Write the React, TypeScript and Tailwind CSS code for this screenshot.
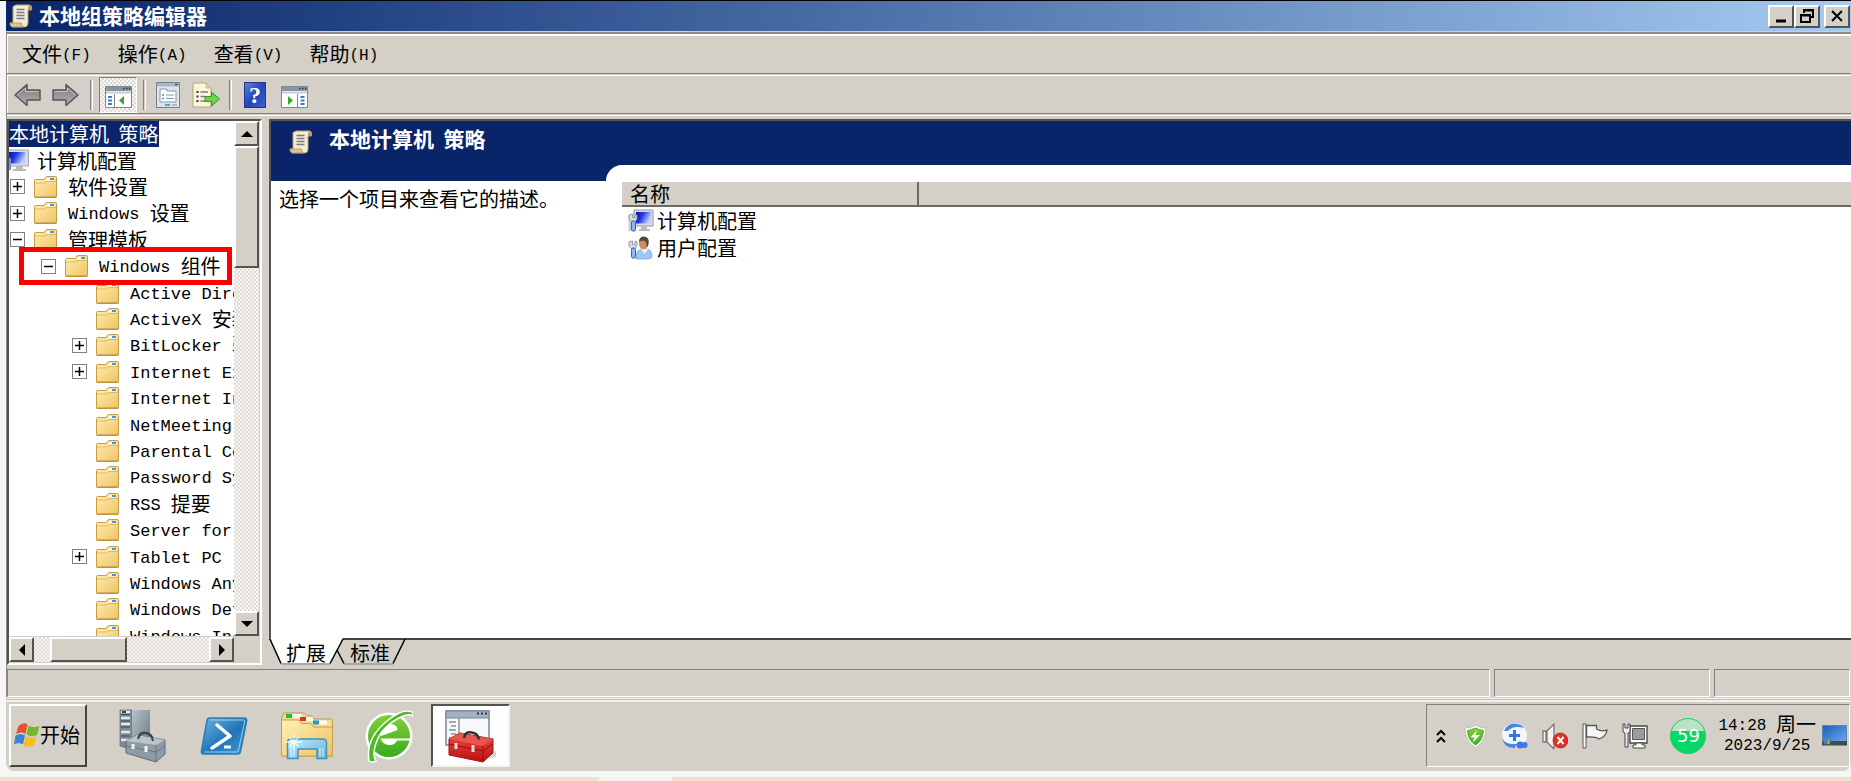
import type { ReactNode } from "react";
import clsx from "clsx";

interface TreeItem {
  label: string;
  level: 0 | 1 | 2;
  state?: "open" | "closed";
  marked?: boolean;
}

const TREE: TreeItem[] = [
  { label: "软件设置", level: 0, state: "closed" },
  { label: "Windows 设置", level: 0, state: "closed" },
  { label: "管理模板", level: 0, state: "open" },
  { label: "Windows 组件", level: 1, state: "open", marked: true },
  { label: "Active Directory", level: 2 },
  { label: "ActiveX 安装程序", level: 2 },
  { label: "BitLocker 驱动器", level: 2, state: "closed" },
  { label: "Internet Explorer", level: 2, state: "closed" },
  { label: "Internet Information", level: 2 },
  { label: "NetMeeting", level: 2 },
  { label: "Parental Controls", level: 2 },
  { label: "Password Synchronization", level: 2 },
  { label: "RSS 提要", level: 2 },
  { label: "Server for NIS", level: 2 },
  { label: "Tablet PC", level: 2, state: "closed" },
  { label: "Windows Anytime", level: 2 },
  { label: "Windows Defender", level: 2 },
  { label: "Windows Installer", level: 2 },
];

const INDENT = ["pl-px", "pl-8", "pl-[63px]"];
const MENUS = ["文件(F)", "操作(A)", "查看(V)", "帮助(H)"];

const RAISED =
  "border-2 border-t-white border-l-white border-r-[#55534f] border-b-[#55534f] bg-[#d4d0c8]";
const SUNKEN =
  "border border-t-[#808080] border-l-[#808080] border-r-white border-b-white";
const TRACK =
  "bg-[repeating-conic-gradient(#dedbd5_0_25%,#f8f7f5_0_50%)] bg-[length:4px_4px]";

// Latin runs are half as wide as the Chinese characters next to them
function Mixed({ text, wide }: { text: string; wide?: boolean }) {
  return (
    <>
      {text.split(/([\x20-\x7e]+)/).map((part, i) =>
        i % 2 === 1 ? (
          <span
            key={i}
            className={clsx(
              "align-[2px] font-['Liberation_Mono',monospace]",
              wide ? "text-[17px]/4" : "text-base/4"
            )}
          >
            {part}
          </span>
        ) : (
          part
        )
      )}
    </>
  );
}

function Gradients() {
  return (
    <svg className="absolute size-0" aria-hidden="true">
      <defs>
        <linearGradient id="folder" x1="0" y1="0" x2="1" y2="1">
          <stop offset="0" stopColor="#fff0b4" />
          <stop offset="1" stopColor="#eec263" />
        </linearGradient>
        <linearGradient id="screen" x1="0" y1="0" x2="1" y2="0.4">
          <stop offset="0" stopColor="#0a10b0" />
          <stop offset="0.45" stopColor="#2436e0" />
          <stop offset="1" stopColor="#bcd0ff" />
        </linearGradient>
        <linearGradient id="steel" x1="0" y1="0" x2="1" y2="1">
          <stop offset="0" stopColor="#b9c4cb" />
          <stop offset="1" stopColor="#66747e" />
        </linearGradient>
        <linearGradient id="arrow" x1="0" y1="0" x2="0" y2="1">
          <stop offset="0" stopColor="#777" />
          <stop offset="1" stopColor="#b4b4b4" />
        </linearGradient>
        <linearGradient id="ps" x1="0" y1="0" x2="1" y2="1">
          <stop offset="0" stopColor="#68b8e4" />
          <stop offset="0.55" stopColor="#2273b8" />
          <stop offset="1" stopColor="#3f9fd6" />
        </linearGradient>
        <linearGradient id="green" x1="0" y1="0" x2="0" y2="1">
          <stop offset="0" stopColor="#82cf38" />
          <stop offset="1" stopColor="#38ad1e" />
        </linearGradient>
        <linearGradient id="red" x1="0" y1="0" x2="0" y2="1">
          <stop offset="0" stopColor="#ee4a40" />
          <stop offset="1" stopColor="#bb1014" />
        </linearGradient>
        <linearGradient id="glass" x1="0" y1="0" x2="1" y2="1">
          <stop offset="0" stopColor="#c3efff" />
          <stop offset="1" stopColor="#62aed3" />
        </linearGradient>
        <linearGradient id="desk" x1="0" y1="0" x2="1" y2="1">
          <stop offset="0" stopColor="#1f5cb8" />
          <stop offset="1" stopColor="#6aaaf0" />
        </linearGradient>
      </defs>
    </svg>
  );
}

function ScrollIcon() {
  return (
    <svg className="size-6 shrink-0" viewBox="0 0 24 24">
      <path d="M4 2.500 7 1h14q2.500 1 1.500 5h-3.500v13q0 4-3.500 4H3q-2-1-2-4h3z" fill="#f5edcd" stroke="#b9a66e" />
      <path d="M19 6q-.5-4 2-5 3 1 1.500 5z" fill="#b99c55" />
      <path d="M1 19h11.500q0 3 2.500 4H3q-2-1-2-4z" fill="#dcc88c" stroke="#a58f55" strokeWidth=".7" />
      <path d="M7.500 5.500h8M7.500 8.500h8M7.500 11.500h8M7.500 14.500h8" stroke="#77799a" strokeWidth="1.300" />
    </svg>
  );
}

function FolderIcon() {
  return (
    <svg className="h-[22px] w-[23px] shrink-0" viewBox="0 0 23 22">
      <path d="M.5 4.500q0-1 1-1H10L12 1q.4-.5 1-.5h8.500q1 0 1 1v19q0 1-1 1H1.500q-1 0-1-1z" fill="url(#folder)" stroke="#c99c42" />
      <path d="M13.500 2h7v2.500h-8.500z" fill="#fff" />
      <path d="M16 2h4v2h-4z" fill="#3d9bd8" />
      <path d="M1 7h9.500l2.500-1.500h9" fill="none" stroke="#e5b95b" />
      <path d="M.5 21h22" stroke="#b78a35" />
    </svg>
  );
}

function MonitorIcon() {
  return (
    <svg className="h-6 w-5 shrink-0" viewBox="0 0 20 24">
      <path d="M-4 1h23.500v16H-4z" fill="#d9dce0" stroke="#a4a6aa" />
      <path d="M0 3h16.500v11.500H0z" fill="url(#screen)" />
      <path d="M7 17h7v3H7zM4 20h13v2H4z" fill="#b9bbbe" />
      <path d="M0 9h2v12H0z" fill="#5f96d8" />
    </svg>
  );
}

function Wrench() {
  return (
    <>
      <path d="M1 6v4l2 2.500h4L9 10V6L7 5v3.500H4.500V5z" fill="#d8dde2" stroke="#7e8890" strokeWidth=".8" />
      <rect x="3.500" y="12" width="4" height="10" rx="1.500" fill="#8bbbea" stroke="#2866ad" />
    </>
  );
}

function ComputerConfigIcon() {
  return (
    <svg className="h-6 w-[26px] shrink-0" viewBox="0 0 26 24">
      <path d="M6 1h19v16H6z" fill="#d9dce0" stroke="#97999d" />
      <path d="M8 3h15v11.500H8z" fill="url(#screen)" />
      <path d="M13 17h6v3h-6zM11 20h11v2H11z" fill="#b9bbbe" />
      <path d="M.5 7H4v15H.5z" fill="#c9ccd0" />
      <Wrench />
    </svg>
  );
}

function UserConfigIcon() {
  return (
    <svg className="h-6 w-[26px] shrink-0" viewBox="0 0 26 24">
      <path d="M8 23q-.5-9 6-10h5q5 1 5 7 0 3-4 3z" fill="#9dc8f1" stroke="#6ba1d6" strokeWidth=".7" />
      <path d="m13 13 3.500 5L20 13z" fill="#edf6ff" />
      <ellipse cx="15.500" cy="7.500" rx="4.500" ry="6" fill="#c98f5c" />
      <path d="M11 6q0-5.500 5-5.500 6 .5 4.500 8-1 3-2 2.500Q19 5 15 4.500q-2 0-4 1.500z" fill="#55473a" />
      <Wrench />
    </svg>
  );
}

function ArrowIcon({ flip }: { flip?: boolean }) {
  return (
    <svg className={clsx("h-6 w-[27px]", flip && "-scale-x-100")} viewBox="0 0 27 24">
      <path d="M1 12 13 1.500V7h13v10H13v5.500z" fill="url(#arrow)" stroke="#565656" strokeWidth="1.500" strokeLinejoin="round" />
      <path d="M3.500 12 11.500 5v3.500h13" fill="none" stroke="#c4c4c4" />
    </svg>
  );
}

function PaneIcon({ flip }: { flip?: boolean }) {
  return (
    <svg className="h-[22px] w-[27px]" viewBox="0 0 27 22">
      <path d="M.5.5h26v21H.5z" fill="#fff" stroke="#7d8894" />
      <path d="M1 1h25v4H1z" fill="#8794a6" />
      <path d="M18 2.500h1.500M21 2.500h1.500M24 2.500h1.500" stroke="#26364e" strokeWidth="1.500" />
      <path d="M1 6.500h25" stroke="#c6ccd4" strokeWidth="2" />
      {flip ? (
        <>
          <path d="M16.500 8v13" stroke="#7d8894" />
          <path d="M7 10v9l5-4.500z" fill="#35ab25" />
          <path d="M19.500 11h4M19.500 14.500h4M19.500 18h4" stroke="#3e7cc6" strokeWidth="2" />
        </>
      ) : (
        <>
          <path d="M9.500 8v13" stroke="#7d8894" />
          <path d="M19 10v9l-5-4.500z" fill="#35ab25" />
          <path d="M3 11h4M3 14.500h4M3 18h4" stroke="#3e7cc6" strokeWidth="2" />
        </>
      )}
    </svg>
  );
}

function PropertiesIcon() {
  return (
    <svg className="h-[26px] w-6" viewBox="0 0 24 26">
      <path d="M.5.5h23v25H.5z" fill="#dfe4ea" stroke="#77818c" />
      <path d="M1 1h22v3.500H1z" fill="#aab6c4" />
      <path d="M19 2.500h2.500" stroke="#33445c" strokeWidth="1.500" />
      <path d="M4 7h7v2h9v11H4z" fill="#fff" stroke="#8b96a3" />
      <path d="M6 13h2M6 16.500h2" stroke="#26a8e0" strokeWidth="1.500" />
      <path d="M10 13h8M10 16.500h8" stroke="#8c98a6" />
      <path d="M9 22h5v2H9z" fill="#21b7e8" />
      <path d="M16 22h5v2h-5z" fill="#b2bcc8" />
    </svg>
  );
}

function ExportIcon() {
  return (
    <svg className="h-[26px] w-7" viewBox="0 0 28 26">
      <path d="M1 1h13l5 5v19H1z" fill="#fbf6d6" stroke="#b4a877" />
      <path d="M14 1v5h5z" fill="#e3d9a7" stroke="#b4a877" strokeWidth=".7" />
      <path d="M4.500 10h2M4.500 14.500h2M4.500 19h2" stroke="#333" strokeWidth="2" />
      <path d="M8.500 10H16M8.500 14.500H13M8.500 19H13" stroke="#8177a0" strokeWidth="1.500" />
      <path d="M13 14.500h6.500V10l8 7-8 7v-4.500H13z" fill="#67d647" stroke="#2f9a22" />
    </svg>
  );
}

function HelpIcon() {
  return (
    <span className="flex h-[26px] w-[22px] items-center justify-center border border-[#20358c] bg-linear-to-br from-[#5d83e6] via-[#2445b8] to-[#3a62d2] font-['Liberation_Serif',serif] text-2xl font-bold text-white">
      ?
    </span>
  );
}

function ServerIcon() {
  return (
    <svg className="h-[54px] w-12" viewBox="0 0 48 54">
      <path d="M1 1h12v40L1 37z" fill="#7e8b94" stroke="#5b666d" strokeWidth=".7" />
      <path d="M13 1h18v40H13z" fill="url(#steel)" />
      <path d="M2 3h9M2 9h9M2 15h9M2 23h9M2 31h9" stroke="#e2e9ec" strokeWidth="2.500" />
      <path d="M2 5.500h9M2 12h9M2 18h9M2 27h9" stroke="#3c474e" />
      <path d="M3 3h4" stroke="#111" strokeWidth="1.500" />
      <path d="M19 29q2-6 8-5t7 7" fill="none" stroke="#3d454a" strokeWidth="2" />
      <path d="m7 32 11-6 28 5v14l-9 8-30-9z" fill="#8e9ba5" stroke="#5f6c75" />
      <path d="m7 32 11-6 28 5-9 5z" fill="#b8c3ca" />
      <path d="M19 30q2-7 8-6t7 8" fill="none" stroke="#3d454a" strokeWidth="2" />
      <path d="M37 36v17M7 37l30 6 9-6" fill="none" stroke="#66747d" />
      <path d="M14 35v5M27 37v6" stroke="#eef3f5" strokeWidth="3" />
    </svg>
  );
}

function PowerShellIcon() {
  return (
    <svg className="h-10 w-12" viewBox="0 0 48 40">
      <path d="M9.500 2H44q3.500 0 2.500 3.500l-6 30q-.6 2.500-3.500 2.500H4q-3.500 0-2.500-3.500L7 4.500Q7.500 2 9.500 2z" fill="url(#ps)" stroke="#2a7db5" strokeWidth="1.500" />
      <path d="M10 4h33.500q1.500 0 1 2l-6 28q-.4 2-2 2H4.500" fill="none" stroke="#93d2ef" />
      <path d="m17 9 13 11-18 12" fill="none" stroke="#fff" strokeWidth="3.500" strokeLinecap="round" strokeLinejoin="round" />
      <path d="M24 31h7" stroke="#fff" strokeWidth="3" />
    </svg>
  );
}

function ExplorerIcon() {
  return (
    <svg className="h-12 w-[54px]" viewBox="0 0 54 48">
      <path d="M1.500 6 4 1h20l3 3h5l2 3h16.500q2 0 2 2v35H1.500z" fill="#f4dc8c" stroke="#bf9b45" />
      <path d="M6 2h6v4H6z" fill="#16c62c" />
      <path d="M12 2h9v4h-9z" fill="#fff" />
      <path d="M20 5h6v4h-6z" fill="#d03a22" />
      <path d="M26 5h7v4h-7z" fill="#fff" />
      <path d="M33 8.500h6v4h-6z" fill="#1d96e6" />
      <path d="M39 8.500h8v4h-8z" fill="#fff" />
      <path d="M1.500 8h17l3 3.500h9l3 3.500h19V44h-51z" fill="url(#folder)" stroke="#c7a04b" />
      <path d="M7.500 46.500V30q0-3 3-3h32q4 0 4 4v15.500h-9.500V37H18v9.500z" fill="url(#glass)" stroke="#3d95c4" strokeWidth="1.500" />
      <path d="M11 31v14M14 31v14M40 36v9M43 36v9" stroke="#e0f8ff" />
      <path d="M14 22v16M6 30h16M9 25l10 10M19 25 9 35" stroke="#fff" strokeWidth="1.300" opacity=".8" />
    </svg>
  );
}

function BrowserIcon() {
  return (
    <svg className="h-[54px] w-12" viewBox="0 0 48 54">
      <circle cx="24" cy="27" r="23.500" fill="#fff" />
      <circle cx="24" cy="27" r="21" fill="url(#green)" />
      <path d="M16 24q1-9 9-9 7 0 7.500 6L16 27z" fill="#fff" />
      <path d="M15.500 29.500H47v2H32q-2 4.500-7.500 4.500-7 0-9-6.500z" fill="#fff" />
      <path d="M4 52Q0 30 22 12 38-1 47 3q2 1 .5 4Q45 3.500 36 8 17 17 11 34 7 46 11 52q-4 2-7 0z" fill="#4dba22" stroke="#fff" strokeWidth="1.500" />
    </svg>
  );
}

function ToolboxIcon() {
  return (
    <svg className="h-[54px] w-[52px]" viewBox="0 0 52 54">
      <path d="M1 2h43v34H1z" fill="#f6f8fa" stroke="#7b8794" strokeWidth="1.500" />
      <path d="M1 2h43v7H1z" fill="#a3b1c3" stroke="#7b8794" />
      <path d="M32 4.500h2M36 4.500h2M40 4.500h2" stroke="#24344c" strokeWidth="2" />
      <path d="M14 9v27" stroke="#8b96a3" strokeWidth="1.500" />
      <path d="M4 13h7M6 17h5M4 21h7M6 25h5M4 29h7" stroke="#8a8f96" strokeWidth="1.300" />
      <path d="m44 50 7-9v7z" fill="#999" opacity=".4" />
      <path d="m4 30 11-6 33 6v14l-10 9-34-7z" fill="url(#red)" stroke="#a51418" />
      <path d="m4 30 11-6 33 6-10 7z" fill="#e8564c" />
      <path d="M19 29q1-7 8-5.500 6 1 7 7" fill="none" stroke="#333" strokeWidth="2.500" />
      <path d="M38 37v16M4 35l34 7 10-7" fill="none" stroke="#98100f" />
      <path d="M11 34v6M28 36v7" stroke="#e9d6d6" strokeWidth="3" />
    </svg>
  );
}

function WindowsFlag() {
  return (
    <svg className="h-6 w-[26px] shrink-0" viewBox="0 0 26 24">
      <path d="M4.500 3q5-4.500 9-1.500L11.500 11q-4-3-9.500 0z" fill="#e8502a" />
      <path d="M14.500 2.500q5.500 3 11 .5l-2.500 9q-5.500 2.500-10.500-.5z" fill="#71b82c" />
      <path d="M1.500 12.500q5.500-3 9.500 0L9 21.500q-4-3-9 0z" fill="#3b83d8" />
      <path d="M12 13q5 3 10.500.5L20 22.500q-5.500 2.500-10.500-.5z" fill="#f8bf1c" />
    </svg>
  );
}

function ShieldIcon() {
  return (
    <svg className="h-6 w-[23px]" viewBox="0 0 23 24">
      <path d="M11.500 1Q16 4 22 4q0 14-10.500 19.500Q1 18 1 4q6 0 10.500-3z" fill="#f7fff2" stroke="#b9c7b2" />
      <path d="M11.500 4q4 2 8 2.500-.5 10-8 14.500-7.500-4.500-8-14.500 4-.5 8-2.500z" fill="url(#green)" stroke="#36852a" strokeWidth=".7" />
      <path d="m13 6-6.500 7.500h4L8.500 19l7.500-8h-4.500z" fill="#fff" />
    </svg>
  );
}

function CloudPlusIcon() {
  return (
    <svg className="size-[27px]" viewBox="0 0 27 27">
      <circle cx="13.500" cy="13.500" r="12.500" fill="#f3f6fd" />
      <path d="M3 9Q8-2 20 3l3 3Q12 3 7 9z" fill="#4684ee" />
      <path d="M1 15q2 7 10 7h5l-2 4Q3 27 1 15z" fill="#4684ee" />
      <circle cx="19" cy="23" r="3.500" fill="#3d78e6" />
      <circle cx="23.500" cy="23" r="3" fill="#3d78e6" />
      <path d="M13.500 8v11M8 13.500h11" stroke="#3874e8" strokeWidth="3" />
    </svg>
  );
}

function SpeakerIcon() {
  return (
    <svg className="size-[26px]" viewBox="0 0 26 26">
      <path d="M1 8h3v11H1zM5 8l7-7v25l-7-7z" fill="#f3f3f3" stroke="#777" strokeWidth="1.300" strokeLinejoin="round" />
      <circle cx="18.500" cy="17.500" r="7.500" fill="#dd3029" stroke="#b91d18" strokeWidth=".7" />
      <path d="m15.500 14 6 7M21.500 14l-6 7" stroke="#fff" strokeWidth="2" />
    </svg>
  );
}

function FlagIcon() {
  return (
    <svg className="size-[26px]" viewBox="0 0 26 26">
      <path d="M1 1h3v24H1z" fill="#fff" stroke="#555" />
      <path d="M4.500 2.500h10v3.500q5 3 10.500 1-1 7-8 9-3-2.500-12.500-2z" fill="#f7f7f7" stroke="#555" strokeWidth="1.300" />
    </svg>
  );
}

function NetworkIcon() {
  return (
    <svg className="size-[26px]" viewBox="0 0 26 26">
      <path d="M8 3h17v17H8z" fill="#fff" stroke="#444" strokeWidth="1.300" />
      <path d="M10.500 5.500h12v11h-12z" fill="#9b9b9b" stroke="#555" />
      <path d="M14 20h6v2h3v3H11v-3h3z" fill="#fff" stroke="#444" />
      <path d="M1 1h2v4h3V1h2v7q0 2-2 2v14H3V10q-2 0-2-2z" fill="#eee" stroke="#444" />
    </svg>
  );
}

function DesktopIcon() {
  return (
    <svg className="h-[21px] w-[25px]" viewBox="0 0 25 21">
      <path d="M.5.5h24v16H.5z" fill="url(#desk)" stroke="#5b84b8" />
      <path d="M0 16h25v4.500H0z" fill="#444b52" />
      <circle cx="5" cy="16" r="3.500" fill="#2e86d8" />
      <path d="M3 14h2v2H3z" fill="#e8502a" />
      <path d="M5.500 14h2v2h-2z" fill="#71b82c" />
      <path d="M5.500 16.500h2v2h-2z" fill="#f8bf1c" />
    </svg>
  );
}

function CaptionButton({ label, children }: { label: string; children: ReactNode }) {
  return (
    <button aria-label={label} className={clsx("flex h-[23px] w-[26px] items-center justify-center", RAISED)}>
      <svg className="h-4 w-5" viewBox="0 0 20 16" fill="none" stroke="#000" strokeWidth="2">
        {children}
      </svg>
    </button>
  );
}

function ScrollButton({ label, points }: { label: string; points: string }) {
  return (
    <button aria-label={label} className={clsx("flex size-[25px] shrink-0 items-center justify-center", RAISED)}>
      <svg className="size-3" viewBox="0 0 12 12">
        <polygon points={points} />
      </svg>
    </button>
  );
}

function Separator() {
  return <span className="h-[30px] w-[3px] border-x border-l-[#808080] border-r-white" />;
}

function TreeRow({ item }: { item: TreeItem }) {
  return (
    <li className={clsx("relative flex items-center whitespace-pre", INDENT[item.level])}>
      {item.state ? (
        <button
          aria-label={item.state === "open" ? "折叠" : "展开"}
          className="flex size-[15px] shrink-0 items-center justify-center border border-[#808080] bg-white"
        >
          <svg className="size-[9px]" viewBox="0 0 9 9" stroke="#000" strokeWidth="1.500">
            <path d={item.state === "open" ? "M0 4.500h9" : "M0 4.500h9M4.500 0v9"} />
          </svg>
        </button>
      ) : (
        <span className="w-[15px] shrink-0" />
      )}
      <span className="ml-[9px] mr-[11px]">
        <FolderIcon />
      </span>
      <span>
        <Mixed text={item.label} wide />
      </span>
      {item.marked && (
        <span className="absolute -inset-y-1.5 left-2.5 z-10 w-[213px] border-5 border-[#fe0000]" />
      )}
    </li>
  );
}

function TreePane() {
  return (
    <nav className="mr-[7px] flex w-[255px] shrink-0 flex-col border-2 border-t-[#55534f] border-l-[#55534f] border-r-white border-b-white">
      <div className="flex min-h-0 flex-1 pr-px">
        <div className="min-w-0 flex-1 overflow-hidden bg-white">
          <ul className="grid h-[528px] auto-rows-fr">
            <li className="flex items-center whitespace-pre">
              <span className="bg-[#0a246a] leading-[26px] text-white">
                <Mixed text="本地计算机 策略" />
              </span>
            </li>
            <li className="flex items-center gap-2">
              <MonitorIcon />
              计算机配置
            </li>
            {TREE.map((item) => (
              <TreeRow key={item.label} item={item} />
            ))}
          </ul>
        </div>
        <div className={clsx("flex w-[25px] flex-col", TRACK)}>
          <ScrollButton label="向上滚动" points="6,3 12,9 0,9" />
          <div className={clsx("h-[122px]", RAISED)} />
          <div className="flex-1" />
          <ScrollButton label="向下滚动" points="6,9 12,3 0,3" />
        </div>
      </div>
      <div className="flex h-[27px] shrink-0 pt-px pb-px">
        <div className={clsx("flex flex-1", TRACK)}>
          <ScrollButton label="向左滚动" points="3,6 9,0 9,12" />
          <div className="w-4" />
          <div className={clsx("w-[77px]", RAISED)} />
          <div className="flex-1" />
          <ScrollButton label="向右滚动" points="9,6 3,0 3,12" />
        </div>
        <div className="w-[26px]" />
      </div>
    </nav>
  );
}

function ResultPane() {
  return (
    <main className="flex min-w-0 flex-1 flex-col">
      <div className="flex min-h-0 flex-1 border-t-2 border-l-2 border-[#55534f] bg-white">
        <section className="w-[335px] shrink-0">
          <h1 className="flex h-[60px] items-center gap-4 bg-[#0a246a] pb-[18px] pl-[18px] text-[21px] font-bold whitespace-pre text-white">
            <ScrollIcon />
            <span className="pb-2">
              <Mixed text="本地计算机 策略" />
            </span>
          </h1>
          <p className="px-2 pt-1.5">选择一个项目来查看它的描述。</p>
        </section>
        <section className="flex min-w-0 flex-1 flex-col bg-[#0a246a] pt-11">
          <div className="flex-1 rounded-tl-[16px] bg-white pt-[17px] pl-4">
            <table className="w-full table-fixed border-collapse text-left">
              <thead>
                <tr className="h-6 border-b-2 border-[#6b6964] bg-[#d4d0c8]">
                  <th className="w-[296px] border-r-2 border-r-[#6b6964] pl-2 leading-[22px] font-normal">
                    名称
                  </th>
                  <th className="border-l border-l-white" />
                </tr>
              </thead>
              <tbody>
                <tr>
                  <td className="h-7 pl-1.5">
                    <span className="flex items-center gap-[3px]">
                      <ComputerConfigIcon />
                      计算机配置
                    </span>
                  </td>
                  <td />
                </tr>
                <tr>
                  <td className="h-7 pl-1.5">
                    <span className="flex items-center gap-[3px]">
                      <UserConfigIcon />
                      用户配置
                    </span>
                  </td>
                  <td />
                </tr>
              </tbody>
            </table>
          </div>
        </section>
      </div>
      <div className="relative flex h-[27px] shrink-0 border-t-2 border-[#45433f]">
        <svg className="absolute -top-0.5 left-0 h-[27px] w-[138px]" viewBox="0 0 138 27">
          <path d="M1 0h73L61 25H12z" fill="#fff" />
          <path d="M1 1 12 25.500M74 1 61 25.500M68 12l7 13.500M136 1l-12 24.500" stroke="#000" strokeWidth="1.500" />
          <path d="M12 26h49M75 26h49" stroke="#808080" />
        </svg>
        <button className="relative w-[68px] pl-1.5 leading-[22px]">扩展</button>
        <button className="relative w-[66px] leading-[22px]">标准</button>
      </div>
    </main>
  );
}

function Taskbar() {
  return (
    <footer className="flex h-[69px] shrink-0 items-center rounded-b-lg bg-[#d4d0c8] pr-px pb-0.5 pl-[3px]">
      <button className="flex h-[63px] w-[78px] items-center justify-center border-2 border-t-white border-l-white border-r-[#45433f] border-b-[#45433f] pr-0.5 pb-0.5">
        <WindowsFlag />
        开始
      </button>
      <button aria-label="服务器管理器" className="ml-8">
        <ServerIcon />
      </button>
      <button aria-label="PowerShell" className="ml-[33px]">
        <PowerShellIcon />
      </button>
      <button aria-label="资源管理器" className="ml-8">
        <ExplorerIcon />
      </button>
      <button aria-label="浏览器" className="ml-[31px]">
        <BrowserIcon />
      </button>
      <button
        aria-label="控制台"
        className="ml-[18px] flex h-[63px] w-[79px] items-center justify-center border-2 border-t-[#55534f] border-l-[#55534f] border-r-[#f4f3f0] border-b-[#f4f3f0] bg-white"
      >
        <ToolboxIcon />
      </button>
      <div className={clsx("ml-auto flex h-[63px] items-center pr-0.5 pl-[9px]", SUNKEN)}>
        <button aria-label="显示隐藏的图标">
          <svg className="h-4 w-[10px]" viewBox="0 0 10 16" fill="none" stroke="#000" strokeWidth="2">
            <path d="m1 7 4-4 4 4M1 14l4-4 4 4" />
          </svg>
        </button>
        <span className="ml-[18px] flex items-center gap-3.5">
          <ShieldIcon />
          <CloudPlusIcon />
          <SpeakerIcon />
          <FlagIcon />
          <NetworkIcon />
        </span>
        <span className="ml-[22px] flex size-9 items-center justify-center rounded-full border border-[#0fcf62] bg-linear-to-b from-[#b9e3c6] from-35% to-[#06d865] to-35% font-['DejaVu_Sans',sans-serif] text-lg text-white">
          59
        </span>
        <time className="ml-3 pb-1 text-center leading-[19px] whitespace-pre">
          <Mixed text="14:28 " />
          周一
          <br />
          <Mixed text="2023/9/25" />
        </time>
        <button aria-label="显示桌面" className="ml-1.5">
          <DesktopIcon />
        </button>
      </div>
    </footer>
  );
}

export default function App() {
  return (
    <div className="flex h-screen flex-col overflow-hidden border-t border-black bg-[#f6f6f6] font-['Noto_Sans_CJK_SC',sans-serif] text-xl leading-6 text-black">
      <Gradients />
      <div className="ml-1.5 flex min-h-0 flex-1 flex-col">
        <header className="flex h-[30px] shrink-0 items-center bg-linear-to-r from-[#0a246a] to-[#a6caf0] pr-px pl-[3px]">
          <ScrollIcon />
          <h2 className="ml-1.5 pb-0.5 text-[21px] font-bold text-white">本地组策略编辑器</h2>
          <div className="ml-auto flex">
            <CaptionButton label="最小化">
              <path d="M5 13h10" strokeWidth="3" />
            </CaptionButton>
            <CaptionButton label="还原">
              <path d="M7 5V2h9v7h-3M7 2.500h9M4 7h9v7H4zM4 7.500h9" />
            </CaptionButton>
            <span className="w-1" />
            <CaptionButton label="关闭">
              <path d="m5 3 10 10M15 3 5 13" />
            </CaptionButton>
          </div>
        </header>
        <div className="flex min-h-0 flex-1 flex-col border-t border-[#d4d0c8] bg-[#d4d0c8]">
          <div className="flex min-h-0 flex-1 flex-col border-t-2 border-l border-[#8d8b87]">
            <div className="flex h-[39px] shrink-0 items-center gap-[27px] border-t-2 border-l border-white pb-0.5 pl-3.5">
              {MENUS.map((menu) => (
                <button key={menu}>
                  <Mixed text={menu} />
                </button>
              ))}
            </div>
            <div className="h-[3px] shrink-0 border-t border-b border-t-[#808080] border-b-white" />
            <div className="flex h-[37px] shrink-0 items-center border-l border-white pl-1.5">
              <button aria-label="后退">
                <ArrowIcon />
              </button>
              <button aria-label="前进" className="ml-[11px]">
                <ArrowIcon flip />
              </button>
              <span className="ml-[11px] flex items-center gap-1.5">
                <Separator />
                <button
                  aria-label="显示/隐藏控制台树"
                  className={clsx("flex h-9 w-[38px] items-center justify-center pt-1", SUNKEN, TRACK)}
                >
                  <PaneIcon />
                </button>
                <Separator />
              </span>
              <button aria-label="属性" className="ml-2.5">
                <PropertiesIcon />
              </button>
              <button aria-label="导出列表" className="mr-[9px] ml-3">
                <ExportIcon />
              </button>
              <Separator />
              <button aria-label="帮助" className="ml-3">
                <HelpIcon />
              </button>
              <button aria-label="显示/隐藏操作窗格" className="ml-[15px] pt-1">
                <PaneIcon flip />
              </button>
            </div>
            <div className="h-1.5 shrink-0 border-t border-[#808080]">
              <div className="mt-px h-px bg-white" />
            </div>
            <div className="flex min-h-0 flex-1">
              <TreePane />
              <ResultPane />
            </div>
            <div className="mt-1 flex h-7 shrink-0 gap-1 pr-px">
              <div className={clsx("flex-1", SUNKEN)} />
              <div className={clsx("w-[216px]", SUNKEN)} />
              <div className={clsx("w-[136px]", SUNKEN)} />
            </div>
          </div>
        </div>
        <div className="h-[5px] shrink-0 border-t border-[#d4d0c8] bg-[#f1f0ee]">
          <div className="mt-px h-px bg-[#c4c1ba]" />
        </div>
        <Taskbar />
      </div>
      <div className="mt-1.5 flex h-1 shrink-0 bg-[#efe2cb]">
        <div className="ml-[599px] w-[73px] bg-[#f8f3ea]" />
      </div>
    </div>
  );
}
